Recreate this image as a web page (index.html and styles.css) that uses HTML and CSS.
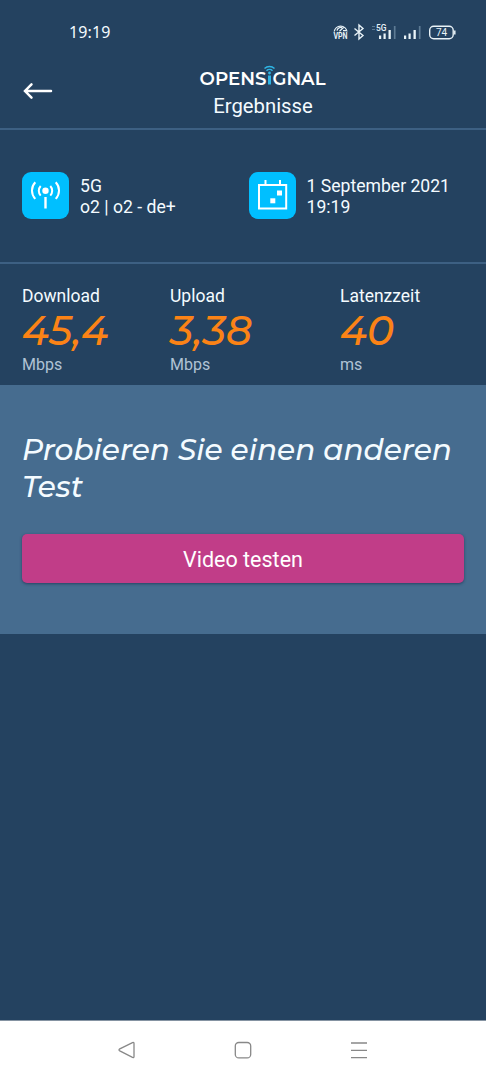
FILE: index.html
```html
<!DOCTYPE html>
<html lang="de">
  <head>
    <meta charset="UTF-8" />
    <meta name="viewport" content="width=device-width, initial-scale=1.0" />
    <title>Ergebnisse</title>
    <link rel="stylesheet" href="styles.css">
  </head>
  <body>
    <div class="statusbar">
      <span class="clock">19:19</span>
      <svg class="status-icons" width="126" height="20" viewBox="0 0 126 20">
        <!-- vpn -->
        <g fill="none" stroke="#e9f3f8" stroke-width="1.3">
          <path d="M1.200 9.500a6.500 6.500 0 0 1 12.800 0M4 8.700a4 4 0 0 1 5-3.200M6.500 9.200l4-3.700M10 8.700h3" />
        </g>
        <text class="vpn" x="0.5" y="17.200" textLength="14" lengthAdjust="spacingAndGlyphs">VPN</text>
        <!-- bluetooth -->
        <path d="M21.500 6.500l8.500 7-4 3.500V3l4 3.500-8.500 7" fill="none" stroke="#e9f3f8" stroke-width="1.4" />
        <!-- mobile signal -->
        <path d="M39 4.500h3M39 7.500h3" stroke="#5d7b94" stroke-width="1.2" />
        <text class="gen" x="43" y="9" textLength="10.500" lengthAdjust="spacingAndGlyphs">5G</text>
        <g fill="#e9f3f8">
          <rect x="46" y="13.500" width="2.200" height="3.500" />
          <rect x="50.500" y="11.500" width="2.200" height="5.500" />
          <rect x="55.500" y="8" width="2.300" height="9" />
          <rect x="71" y="13.500" width="2.200" height="3.500" />
          <rect x="75.500" y="11.500" width="2.200" height="5.500" />
          <rect x="80.500" y="8" width="2.300" height="9" />
        </g>
        <path d="M61.700 4v13M86.700 4v13" stroke="#5d7b94" stroke-width="1.7" />
        <!-- battery -->
        <rect x="96.700" y="4.300" width="23.500" height="12.400" rx="4" fill="none" stroke="#e9f3f8" stroke-width="1.4" />
        <path d="M121.800 8.500v4" stroke="#e9f3f8" stroke-width="1.5" />
        <text class="battery" x="103" y="14.100" textLength="11">74</text>
      </svg>
    </div>

    <header class="header">
      <svg class="back" width="30" height="20" viewBox="0 0 30 20">
        <path d="M28 10H2.500M8.500 3.300L2 10l6.500 6.700" />
      </svg>
      <div class="title">
        <svg class="logo" width="126" height="24" viewBox="0 0 126 24">
          <text x="-0.5" y="20.500" textLength="67" lengthAdjust="spacingAndGlyphs">OPENS</text>
          <text x="72.500" y="20.500" textLength="53" lengthAdjust="spacingAndGlyphs">GNAL</text>
          <rect class="logo-i" x="68" y="11.500" width="3" height="9" />
          <circle class="logo-i" cx="69.500" cy="9" r="1.400" />
          <path class="logo-wave" d="M66.500 6.700a4.400 4.400 0 0 1 6 0M64.500 4.500a7.400 7.400 0 0 1 10 0" />
        </svg>
        <h1>Ergebnisse</h1>
      </div>
    </header>

    <section class="info">
      <div class="info-item">
        <svg class="tile" width="47" height="47" viewBox="0 0 47 47">
          <circle cx="23.500" cy="18.800" r="3.200" fill="#fff" />
          <path d="M23.500 25v11.500" stroke-width="2.400" />
          <path d="M18.700 14a7 7 0 0 0 0 9.600M28.300 14a7 7 0 0 1 0 9.600M13.300 10.300a12 12 0 0 0 0 16.600M33.700 10.300a12 12 0 0 1 0 16.600" stroke-width="2" />
        </svg>
        <p>5G<br />o2 | o2 - de+</p>
      </div>
      <div class="info-item">
        <svg class="tile" width="47" height="47" viewBox="0 0 47 47">
          <path d="M10 13h27.200v23.500H10zM16.500 8v5M31 8v5" stroke-width="2" />
          <rect x="28" y="18.500" width="5" height="5" fill="#fff" />
          <rect x="21.300" y="26.300" width="5" height="5" fill="#fff" />
        </svg>
        <p>1 September 2021<br />19:19</p>
      </div>
    </section>

    <section class="stats">
      <div class="stat">
        <div class="label">Download</div>
        <div class="value">45,4</div>
        <div class="unit">Mbps</div>
      </div>
      <div class="stat">
        <div class="label">Upload</div>
        <div class="value">3,38</div>
        <div class="unit">Mbps</div>
      </div>
      <div class="stat">
        <div class="label">Latenzzeit</div>
        <div class="value">40</div>
        <div class="unit">ms</div>
      </div>
    </section>

    <section class="promo">
      <h2>Probieren Sie einen anderen Test</h2>
      <button>Video testen</button>
    </section>

    <nav class="navbar">
      <svg width="20" height="20" viewBox="0 0 20 20">
        <path d="M15.500 2.600L2.800 8.900q-1.600 1 0 2l12.700 6.500q1.500.5 1.500-1V3.600q0-1.500-1.500-1z" />
      </svg>
      <svg width="20" height="20" viewBox="0 0 20 20">
        <rect x="2.300" y="2.500" width="15.400" height="15.400" rx="3.500" />
      </svg>
      <svg width="20" height="20" viewBox="0 0 20 20">
        <path d="M2 3h16M2 10.300h16M2 17.600h16" />
      </svg>
    </nav>
  </body>
</html>
```

FILE: styles.css
```css
* {
  box-sizing: border-box;
}
body {
  display: flex;
  flex-direction: column;
  height: 1080px;
  margin: 0;
  background: #244260;
  color: #f4fbff;
  font-family: Roboto, sans-serif;
}
h1,
h2,
p {
  margin: 0;
  font-weight: 400;
}
.statusbar {
  display: flex;
  justify-content: space-between;
  align-items: center;
  height: 64px;
  padding: 0 27.5px 0 69px;
}
.clock {
  font-family: "Noto Sans", sans-serif;
  font-size: 16px;
  letter-spacing: 0.1px;
}
.status-icons text {
  fill: #e9f3f8;
  font-family: Roboto, sans-serif;
}
.status-icons .vpn {
  font-size: 8.5px;
  font-weight: 700;
}
.status-icons .gen {
  font-size: 9px;
  font-weight: 500;
}
.status-icons .battery {
  font-size: 10px;
}
.header {
  display: grid;
  grid-template-columns: 40px 1fr;
  height: 66px;
  border-bottom: 2px solid #3d6083;
}
.back {
  margin: 17px 0 0 23px;
  fill: none;
  stroke: #fff;
  stroke-width: 2.5;
  stroke-linecap: round;
}
.title {
  display: flex;
  flex-direction: column;
  align-items: center;
}
.logo {
  overflow: visible;
}
.logo text {
  fill: #fff;
  font-family: Montserrat, Lato, sans-serif;
  font-size: 17.5px;
  font-weight: 600;
}
.logo-i {
  fill: #2fb5e4;
}
.logo-wave {
  fill: none;
  stroke: #2fb5e4;
  stroke-width: 1.5;
}
h1 {
  font-size: 20.3px;
  line-height: 24px;
  margin-top: 5.5px;
}
.info {
  display: grid;
  grid-template-columns: 226.5px 1fr;
  align-items: center;
  height: 134px;
  padding: 0 0 2px 22px;
  border-bottom: 2px solid #3d6083;
}
.info-item {
  display: flex;
  align-items: center;
  gap: 11px;
}
.info-item p {
  padding-top: 3px;
  font-size: 17.6px;
  line-height: 21px;
}
.tile {
  border-radius: 9px;
  background: #00bfff;
  fill: none;
  stroke: #fff;
}
.tile circle,
.tile rect {
  stroke: none;
}
.stats {
  display: grid;
  grid-template-columns: 148px 170px 1fr;
  height: 121px;
  padding: 21px 0 0 22px;
}
.label {
  font-size: 17.5px;
  line-height: 22px;
}
.value {
  color: #fb8316;
  font-family: Montserrat, Lato, sans-serif;
  font-size: 40.5px;
  font-style: italic;
  font-weight: 500;
  line-height: 48px;
}
.unit {
  color: #b0c3d5;
  font-size: 16px;
  line-height: 20px;
}
.promo {
  height: 249px;
  padding: 46px 22px 0;
  background: #466c8f;
}
.promo h2 {
  font-family: Montserrat, Lato, sans-serif;
  font-size: 29.6px;
  font-style: italic;
  font-weight: 500;
  line-height: 36.5px;
}
.promo button {
  width: 100%;
  height: 49px;
  margin-top: 30px;
  padding-top: 3px;
  border: 0;
  border-radius: 5px;
  background: #c13d88;
  box-shadow: 0 1px 3px rgba(20, 40, 70, 0.6);
  color: #fff;
  font-family: Roboto, sans-serif;
  font-size: 21.5px;
}
.navbar {
  display: flex;
  justify-content: center;
  align-items: center;
  gap: 96px;
  height: 60px;
  margin-top: auto;
  padding-bottom: 1px;
  border-top: 1px solid #8593a2;
  background: #fff;
}
.navbar svg {
  fill: none;
  stroke: #888;
  stroke-width: 1.3;
}
```
